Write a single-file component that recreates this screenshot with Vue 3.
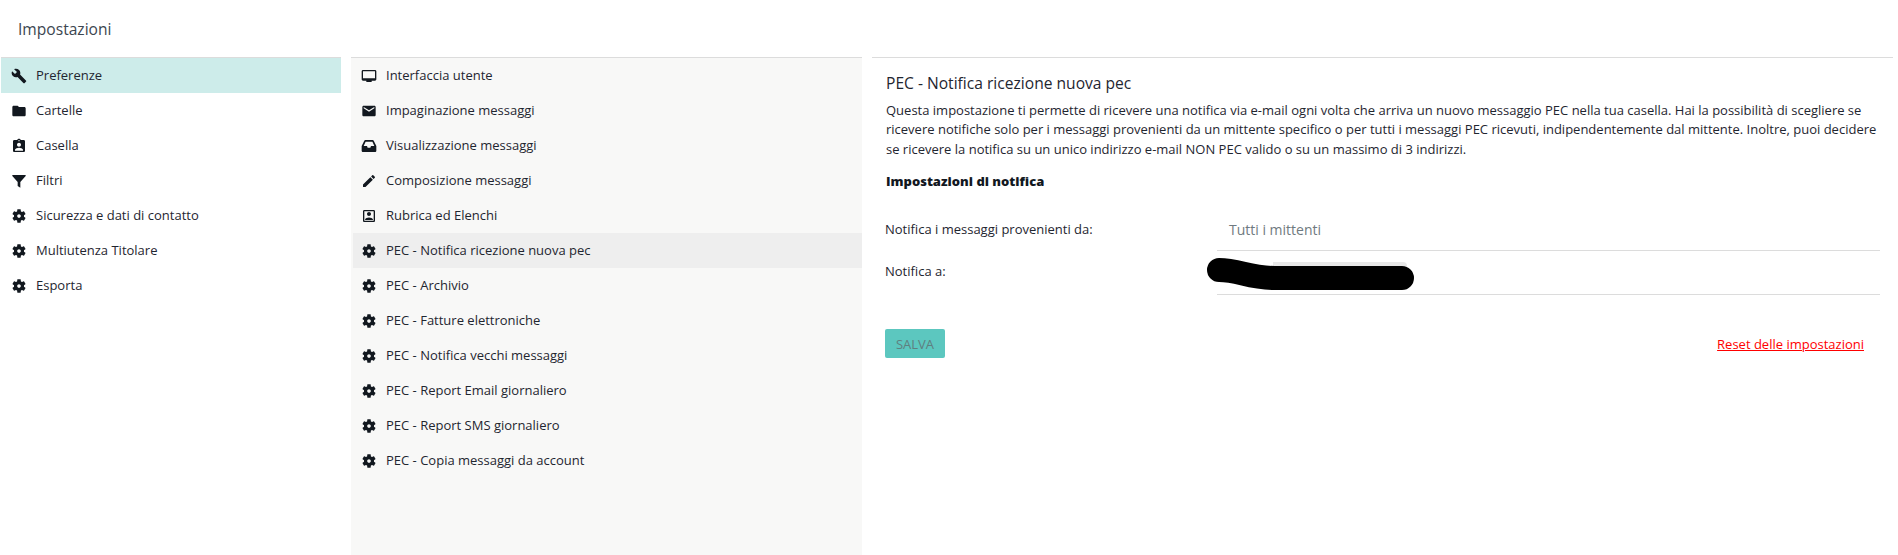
<template>
  <div class="page">
    <h1 class="page-title">Impostazioni</h1>
    <div class="columns">
      <ul class="menu main-menu">
        <li v-for="item in mainItems" :key="item.label" class="menu-item" :class="{ active: item.label === 'Preferenze' }">
          <svg class="icon" viewBox="0 0 24 24"><path :d="icons[item.icon]" /></svg>
          <span>{{ item.label }}</span>
        </li>
      </ul>

      <ul class="menu sub-menu">
        <li v-for="item in subItems" :key="item.label" class="menu-item" :class="{ selected: item.label === selectedItem }">
          <svg class="icon" viewBox="0 0 24 24"><path :d="icons[item.icon]" /></svg>
          <span>{{ item.label }}</span>
        </li>
      </ul>

      <section class="detail">
        <h2 class="detail-title">{{ selectedItem }}</h2>
        <p class="description">
          Questa impostazione ti permette di ricevere una notifica via e-mail ogni volta che arriva un nuovo messaggio PEC nella tua casella. Hai la possibilità di scegliere se ricevere notifiche solo per i messaggi provenienti da un mittente specifico o per tutti i messaggi PEC ricevuti, indipendentemente dal mittente. Inoltre, puoi decidere se ricevere la notifica su un unico indirizzo e-mail NON PEC valido o su un massimo di 3 indirizzi.
        </p>
        <h3 class="section-title">Impostazioni di notifica</h3>

        <div class="form-row first">
          <label>Notifica i messaggi provenienti da:</label>
          <div class="field"><span class="field-value">Tutti i mittenti</span></div>
        </div>
        <div class="form-row second">
          <label>Notifica a:</label>
          <div class="field">
            <span class="chip"></span>
            <svg class="scribble" viewBox="0 0 210 32" width="210" height="32">
              <path d="M12 12 C32 12 42 20 68 20 L195 20" />
            </svg>
          </div>
        </div>

        <div class="actions">
          <button class="save" type="button">SALVA</button>
          <a class="reset" href="#">Reset delle impostazioni</a>
        </div>
      </section>
    </div>
  </div>
</template>

<script setup>
const icons = {
  build: 'M22.7 19l-9.1-9.1c.9-2.3.4-5-1.5-6.9-2-2-5-2.4-7.4-1.3L9 6 6 9 1.6 4.7C.4 7.1.9 10.1 2.9 12.1c1.9 1.9 4.6 2.4 6.9 1.5l9.1 9.1c.4.4 1 .4 1.4 0l2.3-2.3c.5-.4.5-1.1.1-1.4z',
  folder: 'M10 4H4c-1.1 0-1.99.9-1.99 2L2 18c0 1.1.9 2 2 2h16c1.1 0 2-.9 2-2V8c0-1.1-.9-2-2-2h-8l-2-2z',
  badge: 'M19 3h-4.18C14.4 1.84 13.3 1 12 1c-1.3 0-2.4.84-2.82 2H5c-1.1 0-2 .9-2 2v14c0 1.1.9 2 2 2h14c1.1 0 2-.9 2-2V5c0-1.1-.9-2-2-2zm-7 0c.55 0 1 .45 1 1s-.45 1-1 1-1-.45-1-1 .45-1 1-1zm0 4c1.66 0 3 1.34 3 3s-1.34 3-3 3-3-1.34-3-3 1.34-3 3-3zm6 12H6v-1.4c0-2 4-3.1 6-3.1s6 1.1 6 3.1V19z',
  filter: 'M2 3h20v1.5l-8 9V22l-4-2.5v-6l-8-9z',
  cog: 'M19.43 12.98c.04-.32.07-.64.07-.98s-.03-.66-.07-.98l2.11-1.65c.19-.15.24-.42.12-.64l-2-3.46c-.12-.22-.39-.3-.61-.22l-2.49 1c-.52-.4-1.08-.73-1.69-.98l-.38-2.65C14.46 2.18 14.25 2 14 2h-4c-.25 0-.46.18-.49.42l-.38 2.65c-.61.25-1.17.59-1.69.98l-2.49-1c-.23-.09-.49 0-.61.22l-2 3.46c-.13.22-.07.49.12.64l2.11 1.65c-.04.32-.07.65-.07.98s.03.66.07.98l-2.11 1.65c-.19.15-.24.42-.12.64l2 3.46c.12.22.39.3.61.22l2.49-1c.52.4 1.08.73 1.69.98l.38 2.65c.03.24.24.42.49.42h4c.25 0 .46-.18.49-.42l.38-2.65c.61-.25 1.17-.59 1.69-.98l2.49 1c.23.09.49 0 .61-.22l2-3.46c.12-.22.07-.49-.12-.64l-2.11-1.65zM12 14.7c-1.5 0-2.7-1.2-2.7-2.7s1.2-2.7 2.7-2.7 2.7 1.2 2.7 2.7-1.2 2.7-2.7 2.7z',
  desktop: 'M3 3h18c1.1 0 2 .9 2 2v12c0 1.1-.9 2-2 2h-5v2H8v-2H3c-1.1 0-2-.9-2-2V5c0-1.1.9-2 2-2zm0 2v10.5h18V5z',
  mail: 'M20 4H4c-1.1 0-1.99.9-1.99 2L2 18c0 1.1.9 2 2 2h16c1.1 0 2-.9 2-2V6c0-1.1-.9-2-2-2zm0 4l-8 5-8-5V6l8 5 8-5v2z',
  inbox: 'M6.5 3h11c.6 0 1.1.3 1.4.9L23 12v7c0 1.1-.9 2-2 2H3c-1.1 0-2-.9-2-2v-7l4.1-8.1C5.4 3.3 5.9 3 6.5 3zm.4 2.500L4 12h5l1 2.500h4l1-2.500h5l-2.900-6.500z',
  pencil: 'M3 17.25V21h3.75L17.81 9.94l-3.75-3.75L3 17.25zM20.71 7.04c.39-.39.39-1.02 0-1.41l-2.34-2.34c-.39-.39-1.02-.39-1.41 0l-1.83 1.83 3.75 3.75 1.83-1.83z',
  contact: 'M19 3H5c-1.1 0-2 .9-2 2v14c0 1.1.9 2 2 2h14c1.1 0 2-.9 2-2V5c0-1.1-.9-2-2-2zm0 16H5V5h14v14zM12 12c1.65 0 3-1.35 3-3s-1.35-3-3-3-3 1.35-3 3 1.35 3 3 3zm6 5.5c0-2-4-3.1-6-3.1s-6 1.1-6 3.1V18h12v-.5z'
}

const mainItems = [
  { label: 'Preferenze', icon: 'build' },
  { label: 'Cartelle', icon: 'folder' },
  { label: 'Casella', icon: 'badge' },
  { label: 'Filtri', icon: 'filter' },
  { label: 'Sicurezza e dati di contatto', icon: 'cog' },
  { label: 'Multiutenza Titolare', icon: 'cog' },
  { label: 'Esporta', icon: 'cog' }
]

const subItems = [
  { label: 'Interfaccia utente', icon: 'desktop' },
  { label: 'Impaginazione messaggi', icon: 'mail' },
  { label: 'Visualizzazione messaggi', icon: 'inbox' },
  { label: 'Composizione messaggi', icon: 'pencil' },
  { label: 'Rubrica ed Elenchi', icon: 'contact' },
  { label: 'PEC - Notifica ricezione nuova pec', icon: 'cog' },
  { label: 'PEC - Archivio', icon: 'cog' },
  { label: 'PEC - Fatture elettroniche', icon: 'cog' },
  { label: 'PEC - Notifica vecchi messaggi', icon: 'cog' },
  { label: 'PEC - Report Email giornaliero', icon: 'cog' },
  { label: 'PEC - Report SMS giornaliero', icon: 'cog' },
  { label: 'PEC - Copia messaggi da account', icon: 'cog' }
]

const selectedItem = 'PEC - Notifica ricezione nuova pec'
</script>

<style>
html,
body {
  margin: 0;
  background: #fff;
}
</style>

<style scoped>
.page {
  height: 555px;
  overflow: hidden;
  font-family: "Open Sans", sans-serif;
  font-size: 13px;
  color: #1f2630;
}

.page-title {
  margin: 0;
  height: 57px;
  padding: 19px 0 0 18px;
  box-sizing: border-box;
  font-size: 15.6px;
  line-height: 20px;
  font-weight: 400;
  color: #3c4650;
}

.columns {
  display: flex;
  height: 498px;
}

.menu {
  margin: 0;
  padding: 0;
  list-style: none;
  border-top: 1px solid #dcdcdc;
}

.main-menu {
  width: 340px;
  margin-left: 1px;
}

.sub-menu {
  width: 511px;
  margin-left: 10px;
  background: #f8f8f7;
}

.menu-item {
  display: flex;
  align-items: center;
  height: 35px;
  box-sizing: border-box;
  padding: 0 0 1px 10px;
  line-height: 18px;
}

.sub-menu .menu-item {
  margin-left: 2px;
  padding-left: 8px;
}

.menu-item.active {
  background: #cdecea;
}

.menu-item.selected {
  background: #eeeeee;
}

.icon {
  width: 16px;
  height: 16px;
  margin: 1px 9px 0 0;
  flex: none;
  fill: #12181f;
}

.detail {
  width: 1021px;
  margin-left: 10px;
  box-sizing: border-box;
  padding: 14px 13px 0 13px;
  border-top: 1px solid #dcdcdc;
}

.detail-title {
  margin: 0 0 0 1px;
  font-size: 15.6px;
  line-height: 22px;
  font-weight: 400;
  color: #1f2630;
}

.description {
  margin: 6.5px 0 0 1px;
  font-size: 13px;
  line-height: 19.5px;
  color: #1f2630;
}

.section-title {
  margin: 13px 0 0 1px;
  font-size: 13px;
  line-height: 18px;
  font-weight: 800;
  color: #12181f;
}

.form-row {
  display: flex;
}

.form-row label {
  width: 332px;
  flex: none;
}

.form-row.first {
  margin-top: 17px;
}

.form-row.first label {
  padding-top: 13px;
}

.form-row.second label {
  padding-top: 11px;
}

.field {
  position: relative;
  flex: 1;
  height: 43px;
  border-bottom: 1px solid #dcdcdc;
}

.field-value {
  display: block;
  padding: 14px 0 0 12px;
  font-size: 14px;
  line-height: 18px;
  color: #6f7a80;
}

.chip {
  position: absolute;
  left: 56px;
  top: 11px;
  width: 134px;
  height: 8px;
  border-radius: 0 4px 0 0;
  background: #e8e8e8;
}

.scribble {
  position: absolute;
  left: -10px;
  top: 7px;
  fill: none;
  stroke: #000;
  stroke-width: 24;
  stroke-linecap: round;
}

.actions {
  display: flex;
  align-items: center;
  justify-content: space-between;
  margin-top: 34px;
  padding-right: 16px;
}

.save {
  width: 60px;
  height: 29px;
  padding: 0;
  border: 0;
  border-radius: 2px;
  background: #5cc7bf;
  color: #5f7f80;
  font-family: inherit;
  font-size: 13px;
}

.reset {
  color: #ff0000;
  font-size: 13px;
  text-decoration: underline;
}
</style>
